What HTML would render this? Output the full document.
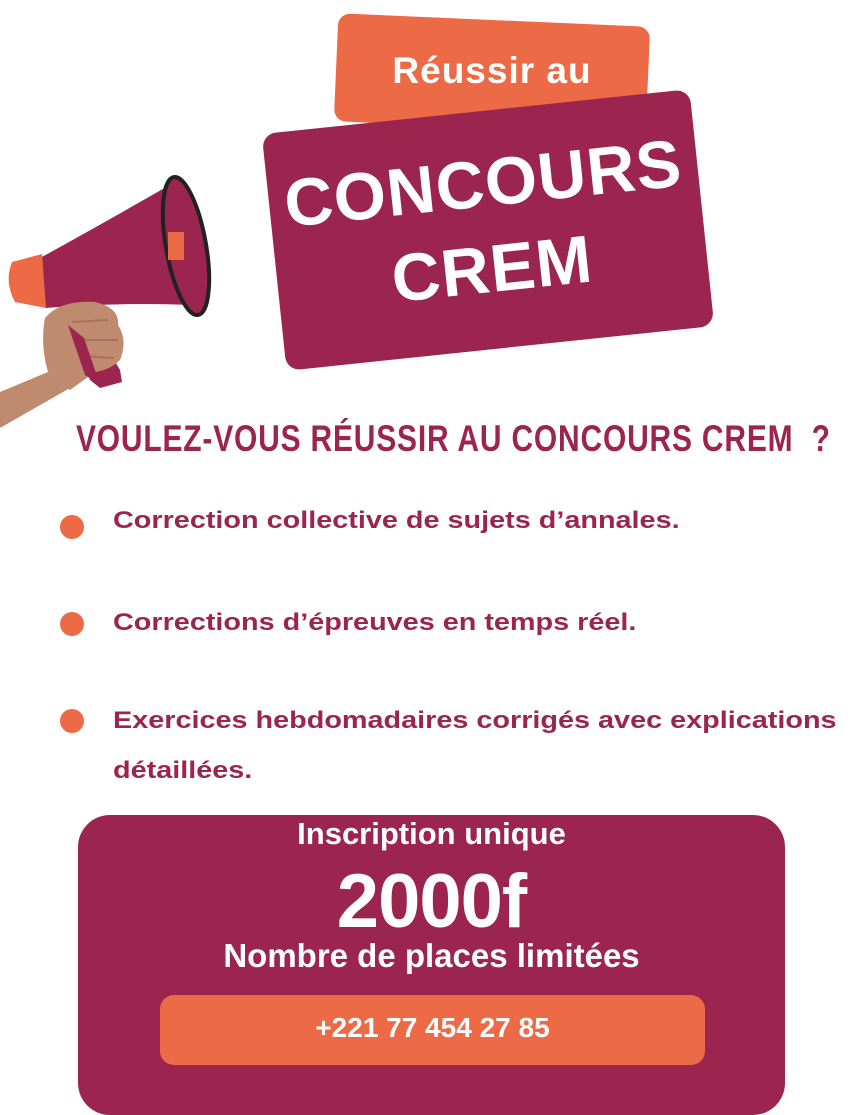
<!DOCTYPE html>
<html><head><meta charset="utf-8"><style>
html,body{margin:0;padding:0;background:#fff;}
body{width:864px;height:1080px;position:relative;overflow:hidden;font-family:"Liberation Sans",sans-serif;}
.abs{position:absolute;}
.orange-card{left:336px;top:20px;width:312px;height:108px;background:#ec6a45;border-radius:12px;transform:rotate(2.5deg);}
.or-t{left:336px;top:50px;width:312px;text-align:center;color:#fff;font-weight:bold;font-size:37px;letter-spacing:1px;}
.mag-card{left:273px;top:111px;width:430px;height:238px;background:#9c2550;border-radius:14px;transform:rotate(-6deg);}
.mag-t{left:273px;top:111px;width:430px;height:238px;transform:rotate(-6deg);color:#fff;font-weight:bold;text-align:center;font-size:67px;line-height:86px;padding-top:30px;box-sizing:border-box;letter-spacing:1px;}
.head{left:76px;top:418px;white-space:nowrap;font-weight:bold;font-size:37px;color:#9c2550;transform-origin:0 0;transform:scaleX(0.81);letter-spacing:1px;}
.dot{width:24px;height:24px;border-radius:50%;background:#ec6a45;}
.li{left:113px;font-weight:bold;font-size:24px;color:#9c2550;white-space:nowrap;transform-origin:0 0;transform:scaleX(1.2);}
.box{left:78px;top:815px;width:707px;height:300px;background:#9c2550;border-radius:32px;}
.bt{left:78px;width:707px;text-align:center;color:#fff;font-weight:bold;}
.btn{left:160px;top:995px;width:545px;height:70px;background:#ec6a45;border-radius:14px;}
</style></head><body>
<svg class="abs" style="left:0;top:170px" width="230" height="270" viewBox="0 170 230 270">
 <path d="M0 392 L48 372 L70 388 L0 428 Z" fill="#c08a6e"/>
 <path d="M60 300 L78 300 L120 370 L122 382 L100 388 L90 380 Z" fill="#9c2550"/>
 <path d="M40 258 Q100 225 168 186 L192 305 Q120 302 45 308 Z" fill="#9c2550"/>
 <path d="M12 262 L42 254 L46 308 L15 302 Q4 282 12 262 Z" fill="#ec6a45"/>
 <ellipse cx="186" cy="246" rx="20" ry="70" transform="rotate(-10 186 246)" fill="#9c2550" stroke="#222" stroke-width="4"/>
 <rect x="168" y="232" width="16" height="28" fill="#ec6a45"/>
 <path d="M45 318 Q60 300 95 302 Q120 308 118 325 Q128 340 120 360 Q110 370 95 372 L70 390 L48 372 Q40 345 45 318 Z" fill="#c08a6e"/>
 <path d="M72 322 L108 320 M78 340 L118 340 M80 356 L114 358" stroke="#a87458" stroke-width="2" fill="none"/>
 <path d="M68 325 L85 375 L100 385 L84 338 Z" fill="#9c2550"/>
</svg>
<div class="abs orange-card"></div>
<div class="abs or-t">Réussir au</div>
<div class="abs mag-card"></div>
<div class="abs mag-t">CONCOURS<br>CREM</div>
<div class="abs head">VOULEZ-VOUS RÉUSSIR AU CONCOURS CREM&nbsp; ?</div>
<div class="abs dot" style="left:60px;top:515px"></div>
<div class="abs li" style="top:507px">Correction collective de sujets d’annales.</div>
<div class="abs dot" style="left:60px;top:612px"></div>
<div class="abs li" style="top:609px">Corrections d’épreuves en temps réel.</div>
<div class="abs dot" style="left:60px;top:709px"></div>
<div class="abs li" style="top:707px">Exercices hebdomadaires corrigés avec explications</div>
<div class="abs li" style="top:757px">détaillées.</div>
<div class="abs box"></div>
<div class="abs bt" style="top:816px;font-size:31px">Inscription unique</div>
<div class="abs bt" style="top:858px;font-size:76px;letter-spacing:-1px">2000f</div>
<div class="abs bt" style="top:937px;font-size:33px">Nombre de places limitées</div>
<div class="abs btn"></div>
<div class="abs" style="left:160px;top:1012px;width:545px;text-align:center;color:#fff;font-weight:bold;font-size:28px">+221 77 454 27 85</div>
</body></html>
